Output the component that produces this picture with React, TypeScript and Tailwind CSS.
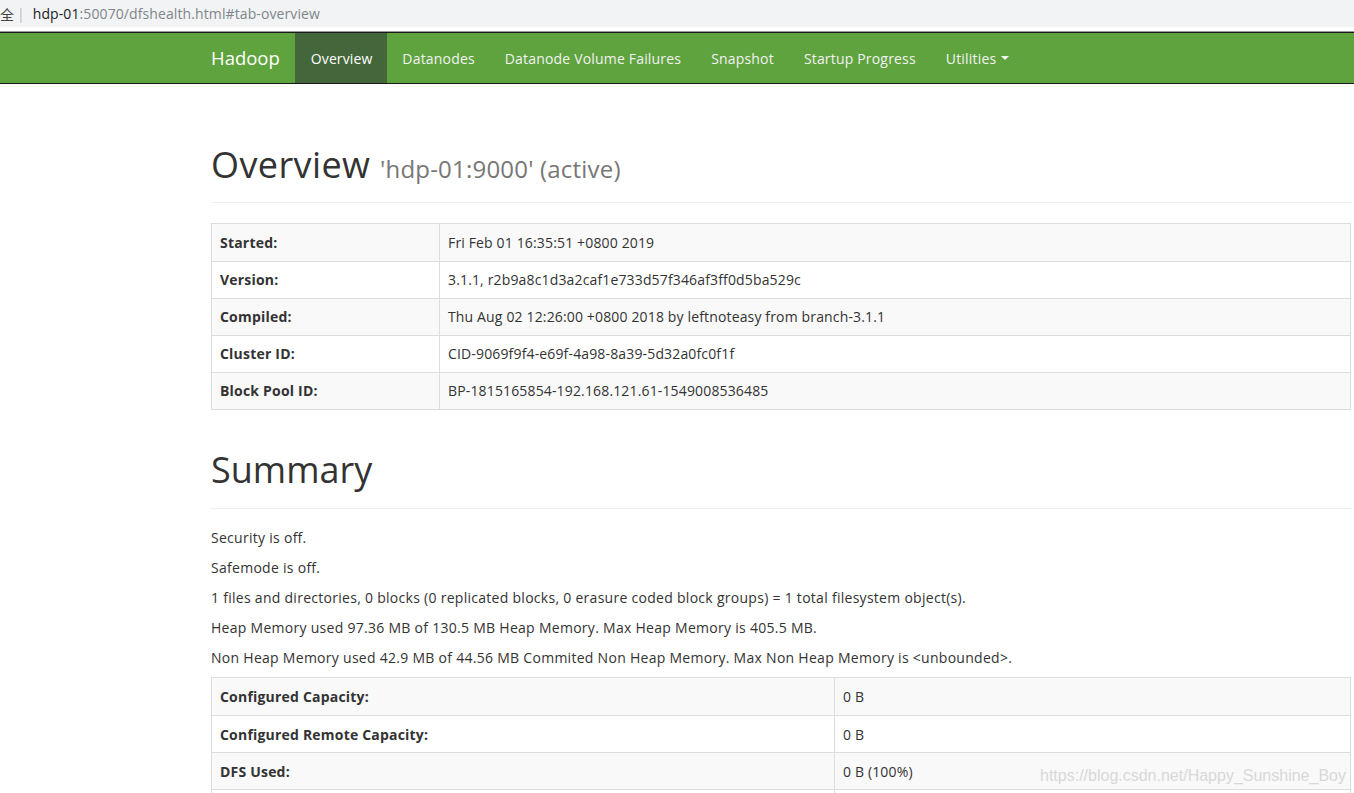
import React from "react";

const font = { fontFamily: '"Open Sans", "Noto Sans CJK SC", sans-serif' };

function InfoTable({ rows, labelW }: { rows: [string, string][]; labelW: string }) {
  return (
    <div className="border border-[#ddd] text-[14px] text-[#333] mb-[20px]">
      {rows.map(([k, v], i) => (
        <div
          key={k}
          className={
            "flex h-[37px] " +
            (i > 0 ? "border-t border-[#ddd] " : "") +
            (i % 2 === 0 ? "bg-[#f9f9f9]" : "bg-white")
          }
        >
          <div className={labelW + " shrink-0 flex items-center px-[8px] font-bold tracking-[0.2px] border-r border-[#ddd]"}>{k}</div>
          <div className="flex-1 flex items-center px-[8px] tracking-[0.15px]">{v}</div>
        </div>
      ))}
    </div>
  );
}

export default function App() {
  const nav = ["Datanodes", "Datanode Volume Failures", "Snapshot", "Startup Progress"];
  return (
    <div className="w-[1354px] h-[793px] overflow-hidden bg-white relative" style={font}>
      {/* address bar */}
      <div className="h-[27px] bg-[#f1f3f4] flex items-center text-[14px] leading-none">
        <span className="text-[#444]" style={{ fontFamily: '"Noto Sans CJK SC", sans-serif' }}>全</span>
        <span className="text-[#bbb] ml-[3px] mr-[8px]">|</span>
        <span className="text-[#202124] tracking-[0.1px]">hdp-01</span>
        <span className="text-[#80868b] tracking-[0.1px]">:50070/dfshealth.html#tab-overview</span>
      </div>
      <div className="h-[4px] bg-white" />
      <div className="h-px bg-[#9a9a9a]" />
      {/* navbar */}
      <div className="h-[52px] bg-[#5fa33e] border-t border-b border-[#1a1a1a] flex items-stretch pl-[196px]">
        <div className="flex items-center pl-[15px] pr-[15px] text-[18.5px] text-white">Hadoop</div>
        <div className="flex items-center pl-[16px] pr-[15px] text-[14px] text-white bg-[#43673a] tracking-[0.1px]">Overview</div>
        {nav.map((n) => (
          <div key={n} className="flex items-center px-[15px] text-[14px] text-[#f2f2f2] tracking-[0.18px]">
            {n}
          </div>
        ))}
        <div className="flex items-center px-[15px] text-[14px] text-[#f2f2f2] tracking-[0.18px]">
          Utilities
          <span className="ml-[5px] inline-block w-0 h-0 border-x-[4px] border-x-transparent border-t-[4px] border-t-[#f2f2f2]" />
        </div>
      </div>

      {/* content */}
      <div className="ml-[211px] w-[1140px]">
        <div className="mt-[59px] pb-[9px] border-b border-[#eee] mb-[20px]">
          <h1 className="text-[36px] leading-[1.1] text-[#333] font-normal mb-[10px] tracking-[0.4px] translate-y-[2px]">
            Overview <span className="text-[24px] text-[#777] tracking-[0.2px]">'hdp-01:9000' (active)</span>
          </h1>
        </div>
        <InfoTable
          labelW="w-[228px]"
          rows={[
            ["Started:", "Fri Feb 01 16:35:51 +0800 2019"],
            ["Version:", "3.1.1, r2b9a8c1d3a2caf1e733d57f346af3ff0d5ba529c"],
            ["Compiled:", "Thu Aug 02 12:26:00 +0800 2018 by leftnoteasy from branch-3.1.1"],
            ["Cluster ID:", "CID-9069f9f4-e69f-4a98-8a39-5d32a0fc0f1f"],
            ["Block Pool ID:", "BP-1815165854-192.168.121.61-1549008536485"],
          ]}
        />
        <div className="mt-[40px] pb-[9px] border-b border-[#eee] mb-[20px]">
          <h1 className="text-[36px] leading-[1.1] text-[#333] font-normal mb-[10px]">Summary</h1>
        </div>
        <div className="text-[14px] leading-[20px] text-[#333] tracking-[0.28px] -mt-[1px]">
          <p className="mb-[10px]">Security is off.</p>
          <p className="mb-[10px]">Safemode is off.</p>
          <p className="mb-[10px]">
            1 files and directories, 0 blocks (0 replicated blocks, 0 erasure coded block groups) = 1 total filesystem object(s).
          </p>
          <p className="mb-[10px]">Heap Memory used 97.36 MB of 130.5 MB Heap Memory. Max Heap Memory is 405.5 MB.</p>
          <p className="mb-[9px]">
            Non Heap Memory used 42.9 MB of 44.56 MB Commited Non Heap Memory. Max Non Heap Memory is &lt;unbounded&gt;.
          </p>
        </div>
        <InfoTable
          labelW="w-[623px]"
          rows={[
            ["Configured Capacity:", "0 B"],
            ["Configured Remote Capacity:", "0 B"],
            ["DFS Used:", "0 B (100%)"],
            ["Non DFS Used:", "0 B"],
          ]}
        />
      </div>
      <div
        className="absolute left-[1040px] top-[764px] text-[16px] text-[#d8d8d8]"
        style={{ fontFamily: '"Liberation Sans", sans-serif' }}
      >
        https://blog.csdn.net/Happy_Sunshine_Boy
      </div>
    </div>
  );
}
